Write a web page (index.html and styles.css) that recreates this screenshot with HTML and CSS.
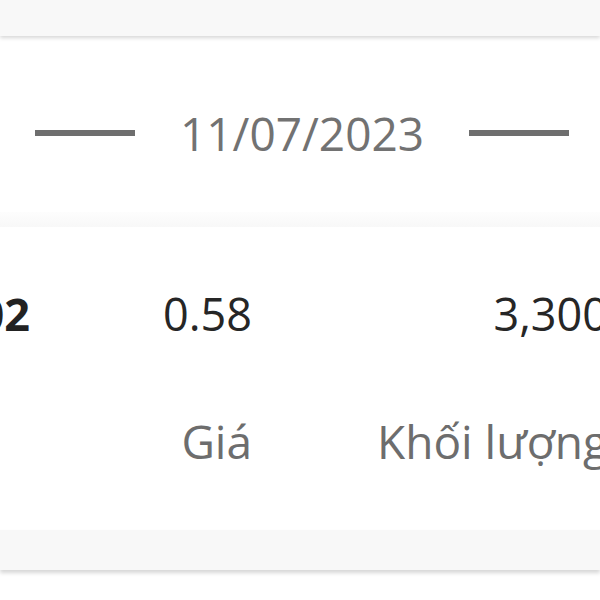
FILE: index.html
```html
<!DOCTYPE html>
<html lang="vi">
<head>
  <meta charset="UTF-8">
  <title>Lịch sử khớp lệnh</title>
  <link rel="stylesheet" href="styles.css">
</head>
<body>
<div class="topbar"></div>

<div class="date-row">
  <span class="dash"></span>
  <span class="date">11/07/2023</span>
  <span class="dash"></span>
</div>
<div class="fade"></div>

<div class="trade">
  <div class="cell time">09:15:02</div>
  <div class="cell">0.58</div>
  <div class="cell">3,300</div>
  <div class="cell label"></div>
  <div class="cell label">Giá</div>
  <div class="cell label">Khối lượng</div>
</div>

<div class="bottombar"></div>
</body>
</html>
```

FILE: styles.css
```css
html, body {
	margin: 0;
	padding: 0;
	background: #fff;
	overflow: hidden;
}
body {
	width: 600px;
	height: 600px;
	font-family: "Open Sans", "Noto Sans", sans-serif;
}
.topbar {
	height: 36px;
	background-color: #f8f8f8;
	box-shadow: 0 2px 4px rgba(0, 0, 0, 0.16);
	position: relative;
}
.date-row {
	display: flex;
	align-items: center;
	justify-content: center;
	gap: 45px;
	padding: 66px 0 48px 4px;
}
.dash {
	width: 100px;
	height: 6px;
	background-color: #6e6e6e;
}
.date {
	font-size: 46px;
	color: #727272;
}
.fade {
	height: 15px;
	background: linear-gradient(#fdfdfd, #f8f8f8);
}
.trade {
	display: grid;
	grid-template-columns: 175px 227px 356px;
	row-gap: 66px;
	margin-left: -150px;
	padding: 56px 0 58px 0;
	font-size: 45px;
}
.cell {
	text-align: right;
	white-space: nowrap;
	color: #262626;
}
.time {
	font-weight: bold;
	color: #222;
}
.label {
	font-size: 46px;
	color: #6d6d6d;
	min-height: 62px;
}
.bottombar {
	height: 40px;
	background-color: #f8f8f8;
	box-shadow: 0 3px 4px rgba(0, 0, 0, 0.16);
	position: relative;
}
```
